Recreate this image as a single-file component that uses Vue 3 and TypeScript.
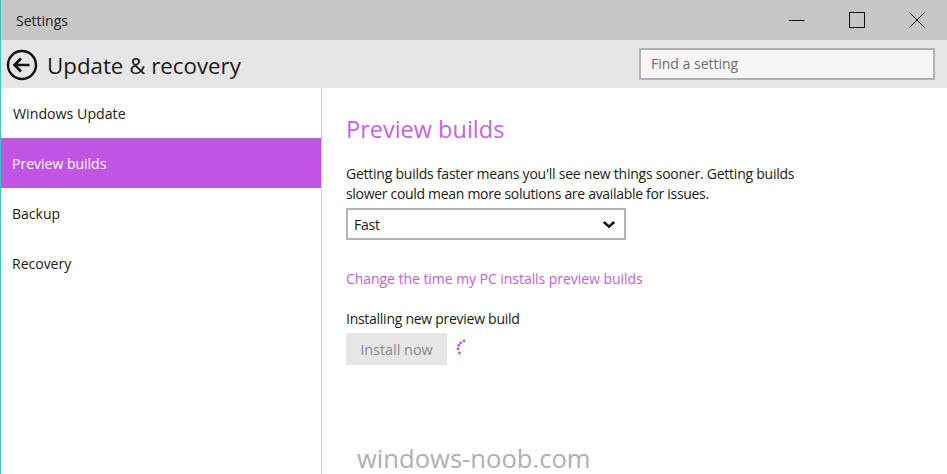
<script setup lang="ts">
const navItems: string[] = ['Windows Update', 'Preview builds', 'Backup', 'Recovery']
const activeItem = 'Preview builds'
const spinnerDots = [
  [8, 3.7], [4.7, 5.7], [2.7, 8.3], [2, 11.7], [3.3, 16],
]
</script>

<template>
  <div class="window">
    <header class="titlebar">
      <span class="app-title">Settings</span>
      <div class="controls">
        <svg class="ctl" width="16" height="16" viewBox="0 0 16 16"><path d="M0 8.5h15.5" stroke="#111" fill="none" /></svg>
        <svg class="ctl" width="16" height="16" viewBox="0 0 16 16"><rect x="0.5" y="0.5" width="15" height="15" stroke="#111" fill="none" /></svg>
        <svg class="ctl" width="16" height="16" viewBox="0 0 16 16"><path d="M0.5 0.5l15 15M15.5 0.5l-15 15" stroke="#111" fill="none" /></svg>
      </div>
    </header>
    <div class="headerbar">
      <svg class="back" width="32" height="32" viewBox="0 0 32 32">
        <circle cx="16" cy="16" r="14" fill="none" stroke="#111" stroke-width="2.4" />
        <path d="M8.5 16h15M15 9.5L8.5 16l6.5 6.5" fill="none" stroke="#111" stroke-width="2.6" />
      </svg>
      <h1 class="page-title">Update &amp; recovery</h1>
      <div class="search">Find a setting</div>
    </div>
    <div class="body">
      <nav class="sidebar">
        <div v-for="item in navItems" :key="item" class="nav-item" :class="{ active: item === activeItem }">{{ item }}</div>
      </nav>
      <main class="content">
        <h2 class="section-title">Preview builds</h2>
        <p class="desc">
          <span class="desc-a">Getting builds faster means you'll see new things sooner. Getting builds</span><br />
          <span class="desc-b">slower could mean more solutions are available for issues.</span>
        </p>
        <div class="select">
          <span>Fast</span>
          <svg width="14" height="10" viewBox="0 0 14 10"><path d="M1.8 3L7 7.6 12.2 3" fill="none" stroke="#111" stroke-width="2.6" /></svg>
        </div>
        <a class="link">Change the time my PC installs preview builds</a>
        <p class="status">Installing new preview build</p>
        <div class="install-row">
          <div class="install-btn">Install now</div>
          <svg class="spinner" width="14" height="18" viewBox="0 0 14 18">
            <circle v-for="(d, i) in spinnerDots" :key="i" :cx="d[0]" :cy="d[1]" r="1.5" fill="#c75ce9" />
          </svg>
        </div>
      </main>
    </div>
    <div class="watermark">windows-noob.com</div>
  </div>
</template>

<style>
html, body { margin: 0; background: #fff; }
</style>

<style scoped>
.window {
  position: relative;
  width: 947px;
  height: 474px;
  overflow: hidden;
  box-sizing: border-box;
  border-left: 1px solid #3fbfc6;
  font-family: "Open Sans", "Noto Sans", sans-serif;
  color: #1a1a1a;
  background: #fff;
  display: flex;
  flex-direction: column;
}
.titlebar {
  height: 40px;
  flex: none;
  background: #c7c7c7;
  display: flex;
  align-items: center;
  justify-content: space-between;
  padding: 0 22px 0 15px;
}
.app-title { font-size: 14px; }
.controls { display: flex; gap: 44px; align-items: center; }
.ctl { display: block; }
.headerbar {
  height: 48px;
  flex: none;
  background: #e6e6e6;
  display: flex;
  align-items: center;
  padding: 0 12px 0 5px;
}
.back { flex: none; margin-top: 1px; }
.page-title {
  margin: 3px 0 0 9px;
  font-size: 22.3px;
  font-weight: 400;
  flex: 1;
}
.search {
  width: 296px;
  height: 32px;
  box-sizing: border-box;
  border: 2px solid #b3b3b3;
  background: #f6f6f6;
  color: #6d6d6d;
  font-size: 14px;
  line-height: 27px;
  padding-left: 10px;
}
.body {
  flex: 1;
  display: flex;
  min-height: 0;
  background: linear-gradient(#c8c8c8, #c8c8c8) 320px 0 / 1px 100% no-repeat;
}
.sidebar { width: 321px; flex: none; }
.nav-item {
  width: 320px;
  height: 50px;
  line-height: 52px;
  padding-left: 11px;
  box-sizing: border-box;
  font-size: 14px;
}
.nav-item:first-child { padding-left: 12px; font-size: 14.2px; }
.nav-item.active {
  background: #bf54e5;
  color: #fff;
}
.content { flex: 1; padding: 24px 0 0 24px; }
.section-title {
  margin: 0;
  font-size: 23.5px;
  font-weight: 400;
  line-height: 34px;
  color: #c563e7;
}
.desc {
  margin: 18px 0 0;
  font-size: 14px;
  line-height: 19.5px;
}
.desc-a { letter-spacing: -0.24px; }
.desc-b { letter-spacing: -0.31px; }
.select {
  margin-top: 5px;
  width: 280px;
  height: 32px;
  box-sizing: border-box;
  border: 2px solid #b3b3b3;
  display: flex;
  align-items: center;
  justify-content: space-between;
  padding: 0 8px 0 6px;
  font-size: 14px;
  letter-spacing: -0.2px;
}
.link {
  display: block;
  margin-top: 29px;
  font-size: 14px;
  letter-spacing: -0.05px;
  line-height: 20px;
  color: #c75ce9;
}
.status {
  margin: 20px 0 0;
  font-size: 14px;
  letter-spacing: -0.27px;
  line-height: 20px;
}
.install-row {
  margin-top: 4px;
  display: flex;
  align-items: flex-start;
  gap: 9px;
}
.install-btn {
  width: 101px;
  height: 32px;
  background: #e6e6e6;
  color: #8a8a8a;
  font-size: 14.4px;
  line-height: 34px;
  text-align: center;
}
.spinner { margin-top: 4px; }
.watermark {
  position: absolute;
  left: 356px;
  top: 444px;
  font-family: "Open Sans", sans-serif;
  font-size: 25.6px;
  line-height: 30px;
  color: #b0b0b0;
}
</style>
